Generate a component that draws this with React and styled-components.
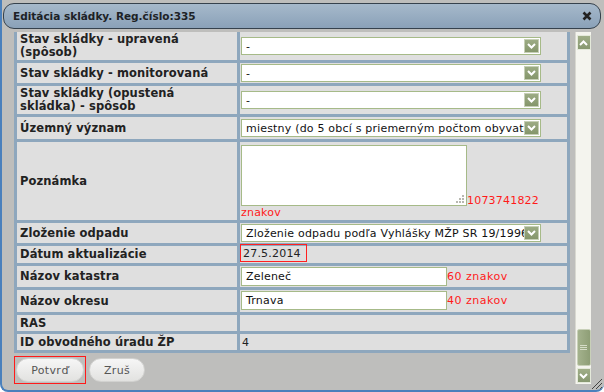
import React from "react";
import styled, { createGlobalStyle } from "styled-components";

const GlobalStyle = createGlobalStyle`
  html, body {
    margin: 0;
    padding: 0;
    background: #ffffff;
  }
  body {
    font-family: "DejaVu Sans", Verdana, sans-serif;
    overflow: hidden;
  }
`;

const Dialog = styled.div`
  position: relative;
  width: 604px;
  height: 392px;
  box-sizing: border-box;
  background: #bebebc;
  border-left: 2px solid #4a80bc;
  border-bottom: 2px solid #4a80bc;
  border-radius: 0 0 8px 8px;
  display: flex;
  flex-direction: column;
  overflow: hidden;
`;

const TitleBar = styled.div`
  height: 26px;
  margin: 3px 3px 0 1px;
  box-sizing: border-box;
  border: 1px solid #36424d;
  border-radius: 11px;
  background: linear-gradient(#a6b9cb, #8aa1b8);
  display: flex;
  align-items: center;
  justify-content: space-between;
  padding: 0 8px 0 9px;
`;

const Title = styled.span`
  font-size: 10.5px;
  font-weight: bold;
  color: #1d2226;
`;

const Body = styled.div`
  flex: 1;
  display: flex;
  padding: 3px 0 0 12px;
  min-height: 0;
`;

const Viewport = styled.div`
  width: 556px;
  margin-right: 5px;
  overflow: hidden;
  display: flex;
  flex-direction: column;
  gap: 3px;
`;

const Grid = styled.div`
  display: grid;
  grid-template-columns: 220px 327px;
  gap: 3px;
  padding: 0 3px 3px;
  background: #8ea7bd;
`;

const Label = styled.div`
  background: #dfdfdf;
  padding: ${(p) => p.$pad || "1px 3px"};
  font-size: 11.5px;
  line-height: 13px;
  font-weight: bold;
  letter-spacing: 0.1px;
  color: #222;
  display: flex;
  align-items: center;
`;

const Value = styled.div`
  background: #dfdfdf;
  padding: ${(p) => p.$pad || "1px 1px"};
  font-size: 11px;
  line-height: 13px;
  letter-spacing: 0.2px;
  color: #222;
  display: flex;
  align-items: center;
`;

const SelectBox = styled.div`
  width: 300px;
  height: 18px;
  box-sizing: border-box;
  border: 1px solid #a6ba88;
  background: #fff;
  display: flex;
  align-items: center;
  padding: 0 1px 0 4px;
`;

const SelectText = styled.span`
  flex: 1;
  white-space: nowrap;
  overflow: hidden;
  font-size: 11px;
  color: #111;
`;

const ArrowBtn = styled.span`
  width: 15px;
  height: 14px;
  box-sizing: border-box;
  border: 1px solid #c6cfb6;
  background: linear-gradient(#9cab84, #85966b);
  display: flex;
  align-items: center;
  justify-content: center;
  flex-shrink: 0;
`;

const TextInput = styled.div`
  width: 206px;
  height: 19px;
  box-sizing: border-box;
  border: 1px solid #a6ba88;
  background: #fff;
  padding: 0 4px;
  display: flex;
  align-items: center;
  font-size: 11px;
  color: #111;
`;

const NoteWrap = styled.div`
  width: 100%;
  line-height: 12px;
`;

const TextArea = styled.span`
  position: relative;
  display: inline-block;
  width: 226px;
  height: 61px;
  box-sizing: border-box;
  border: 1px solid #a6ba88;
  background: #fff;
  vertical-align: -2px;
`;

const Grip = styled.svg`
  position: absolute;
  right: 2px;
  bottom: 2px;
`;

const Hint = styled.span`
  color: #ff1a1a;
  font-size: 11px;
  letter-spacing: ${(p) => (p.$wrap ? "0.2px" : "0.5px")};
  white-space: ${(p) => (p.$wrap ? "normal" : "nowrap")};
`;

const DateBox = styled.div`
  width: 67px;
  height: 18px;
  box-sizing: border-box;
  border: 1px solid #ff2020;
  margin: -2px 0 0 -1px;
  padding: 2px 2px 0;
  font-size: 11px;
  color: #222;
`;

const Buttons = styled.div`
  display: flex;
  gap: 1px;
`;

const Focus = styled.div`
  border: ${(p) => (p.$focus ? "1px solid #ff1a1a" : "1px solid transparent")};
  padding: 1px;
  display: flex;
`;

const Button = styled.button`
  height: 24px;
  width: ${(p) => p.$w}px;
  border-radius: 12px;
  border: 1px solid #d2d2d0;
  background: linear-gradient(#f6f6f6, #e2e2e0);
  font-family: "DejaVu Sans", Verdana, sans-serif;
  font-size: 11px;
  letter-spacing: 0.3px;
  color: #555;
  padding: 0;
`;

const ScrollTrack = styled.div`
  width: 16px;
  height: 352px;
  background: #f4f4ee;
  border-left: 1px solid #d8d8d0;
  display: flex;
  flex-direction: column;
  align-items: center;
  justify-content: space-between;
  padding: 3px 0 1px;
  box-sizing: border-box;
`;

const ScrollBtn = styled.div`
  width: 14px;
  height: 15px;
  box-sizing: border-box;
  border: 1px solid #e4e9da;
  background: linear-gradient(#a0ae88, #879870);
  display: flex;
  align-items: center;
  justify-content: center;
`;

const Thumb = styled.div`
  width: 14px;
  height: 37px;
  box-sizing: border-box;
  border: 1px solid #c8d0b8;
  border-radius: 2px;
  background: linear-gradient(90deg, #a4b28d, #8e9e76);
  display: flex;
  align-items: center;
  justify-content: center;
  margin-bottom: 2px;
`;

const ThumbEnd = styled.div`
  display: flex;
  flex-direction: column;
  align-items: center;
`;

const ResizeGrip = styled.svg`
  position: absolute;
  right: 2px;
  bottom: 1px;
`;

const Chevron = ({ up }) => (
  <svg width="9" height="6" viewBox="0 0 9 6">
    <path
      d={up ? "M1 5 L4.5 1.5 L8 5" : "M1 1 L4.5 4.5 L8 1"}
      fill="none"
      stroke="#fff"
      strokeWidth="2"
    />
  </svg>
);

const Select = ({ text }) => (
  <SelectBox>
    <SelectText>{text}</SelectText>
    <ArrowBtn>
      <Chevron />
    </ArrowBtn>
  </SelectBox>
);

const rows = [
  {
    label: (
      <span>
        Stav skládky - upravená
        <br />
        (spôsob)
      </span>
    ),
    value: <Select text="-" />,
  },
  { label: "Stav skládky - monitorovaná", value: <Select text="-" /> },
  {
    label: (
      <span>
        Stav skládky (opustená
        <br />
        skládka) - spôsob
      </span>
    ),
    value: <Select text="-" />,
  },
  {
    label: "Územný význam",
    value: <Select text="miestny (do 5 obcí s priemerným počtom obyvateľov)" />,
    pad: "2px 1px",
  },
];

export default function App() {
  return (
    <>
      <GlobalStyle />
      <Dialog>
        <TitleBar>
          <Title>Editácia skládky. Reg.číslo:335</Title>
          <svg width="10" height="10" viewBox="0 0 10 10">
            <path d="M1.5 1.5 L8.5 8.5 M8.5 1.5 L1.5 8.5" stroke="#222" strokeWidth="2.6" />
          </svg>
        </TitleBar>
        <Body>
          <Viewport>
            <Grid>
              {rows.map((r, i) => (
                <React.Fragment key={i}>
                  <Label>{r.label}</Label>
                  <Value $pad={r.pad}>{r.value}</Value>
                </React.Fragment>
              ))}

              <Label>Poznámka</Label>
              <Value $pad="3px 1px 1px">
                <NoteWrap>
                  <TextArea>
                    <Grip width="9" height="9" viewBox="0 0 9 9">
                      {[
                        [7, 1], [4, 4], [7, 4], [1, 7], [4, 7], [7, 7],
                      ].map(([x, y]) => (
                        <rect key={`${x}-${y}`} x={x} y={y} width="2" height="2" fill="#b8b8b0" />
                      ))}
                    </Grip>
                  </TextArea>
                  <Hint $wrap>1073741822 znakov</Hint>
                </NoteWrap>
              </Value>

              <Label>Zloženie odpadu</Label>
              <Value>
                <Select text="Zloženie odpadu podľa Vyhlášky MŽP SR 19/1996" />
              </Value>

              <Label>Dátum aktualizácie</Label>
              <Value $pad="0 1px 1px">
                <DateBox>27.5.2014</DateBox>
              </Value>

              <Label>Názov katastra</Label>
              <Value>
                <TextInput>Zeleneč</TextInput>
                <Hint>60 znakov</Hint>
              </Value>

              <Label>Názov okresu</Label>
              <Value $pad="1px 1px 2px">
                <TextInput>Trnava</TextInput>
                <Hint>40 znakov</Hint>
              </Value>

              <Label $pad="2px 3px 1px">RAS</Label>
              <Value />

              <Label $pad="2px 3px 1px">ID obvodného úradu ŽP</Label>
              <Value $pad="2px 2px 1px">4</Value>
            </Grid>
            <Buttons>
              <Focus $focus>
                <Button $w={68}>Potvrď</Button>
              </Focus>
              <Focus>
                <Button $w={56}>Zruš</Button>
              </Focus>
            </Buttons>
          </Viewport>
          <ScrollTrack>
            <ScrollBtn>
              <Chevron up />
            </ScrollBtn>
            <ThumbEnd>
              <Thumb>
                <svg width="7" height="7" viewBox="0 0 7 7">
                  <path d="M0 1.5 H7 M0 3.5 H7 M0 5.5 H7" stroke="#d6dcc8" strokeWidth="1" />
                </svg>
              </Thumb>
              <ScrollBtn>
                <Chevron />
              </ScrollBtn>
            </ThumbEnd>
          </ScrollTrack>
        </Body>
        <ResizeGrip width="11" height="11" viewBox="0 0 11 11">
          <path d="M1 11 L11 1 M5 11 L11 5 M9 11 L11 9" stroke="#444" strokeWidth="1" />
        </ResizeGrip>
      </Dialog>
    </>
  );
}
